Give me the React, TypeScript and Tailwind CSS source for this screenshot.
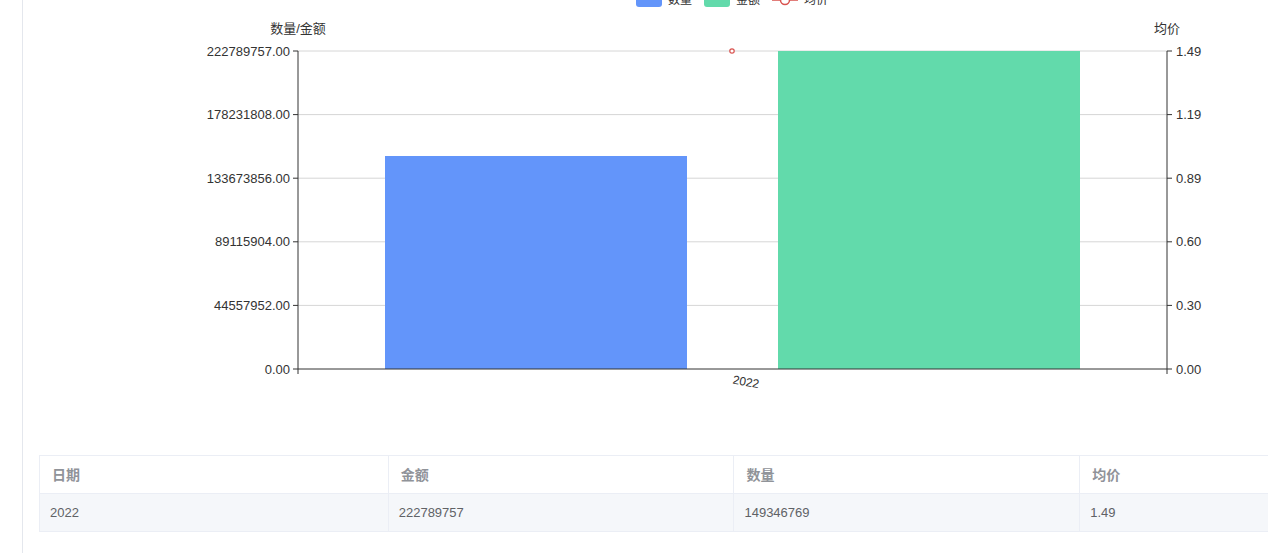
const F = '"Liberation Sans", "Noto Sans CJK SC", sans-serif';

const leftTicks = ['0.00', '44557952.00', '89115904.00', '133673856.00', '178231808.00', '222789757.00'];
const rightTicks = ['0.00', '0.30', '0.60', '0.89', '1.19', '1.49'];

function Chart() {
  // coordinates relative to the content column (page x - 23)
  const ox = 275, ex = 1144, top = 51, bot = 369;
  const step = (bot - top) / 5;
  return (
    <svg width={1245} height={420} className="block" style={{ fontFamily: F }}>
      {/* legend, cut at top */}
      <rect x={613} y={-7} width={26} height={14} rx={3} fill="#6395fa" />
      <text x={645} y={4} fontSize={12} fill="#333">数量</text>
      <rect x={681} y={-7} width={26} height={14} rx={3} fill="#62daab" />
      <text x={713} y={4} fontSize={12} fill="#333">金额</text>
      <line x1={749} y1={0} x2={775} y2={0} stroke="#d9534f" strokeWidth={1.5} />
      <circle cx={762} cy={0} r={4.5} fill="#fff" stroke="#d9534f" strokeWidth={1.5} />
      <text x={781} y={4} fontSize={12} fill="#333">均价</text>

      <text x={ox} y={33} fontSize={13} fill="#333" textAnchor="middle">数量/金额</text>
      <text x={ex} y={33} fontSize={13} fill="#333" textAnchor="middle">均价</text>

      {leftTicks.map((t, i) => {
        const y = bot - i * step;
        return (
          <g key={t}>
            {i > 0 && <line x1={ox} y1={y} x2={ex} y2={y} stroke="#d6d6d6" />}
            <line x1={ox - 5} y1={y} x2={ox} y2={y} stroke="#333" />
            <text x={ox - 8} y={y + 4.5} fontSize={13} fill="#333" textAnchor="end">{t}</text>
            <line x1={ex} y1={y} x2={ex + 5} y2={y} stroke="#333" />
            <text x={ex + 9} y={y + 4.5} fontSize={13} fill="#333">{rightTicks[i]}</text>
          </g>
        );
      })}
      <rect x={362} y={156} width={302} height={bot - 156} fill="#6395fa" />
      <rect x={755} y={top} width={302} height={bot - top} fill="#62daab" />
      <line x1={ox} y1={top} x2={ox} y2={bot} stroke="#333" />
      <line x1={ex} y1={top} x2={ex} y2={bot} stroke="#333" />
      <line x1={ox} y1={bot} x2={ex} y2={bot} stroke="#333" />
      <line x1={ox} y1={bot} x2={ox} y2={bot + 5} stroke="#333" />
      <line x1={ex} y1={bot} x2={ex} y2={bot + 5} stroke="#333" />
      <circle cx={709} cy={top} r={2.2} fill="#fff" stroke="#d9534f" strokeWidth={1.2} />
      <text x={723} y={386} fontSize={12} fill="#333" textAnchor="middle" transform="rotate(10 723 382)">2022</text>
    </svg>
  );
}

export default function App() {
  const cols = ['w-[349px]', 'w-[346px]', 'w-[346px]', 'w-[200px]'];
  const head = ['日期', '金额', '数量', '均价'];
  const row = ['2022', '222789757', '149346769', '1.49'];
  return (
    <div className="flex h-[553px] w-[1268px] overflow-hidden bg-white" style={{ fontFamily: F }}>
      <div className="w-[22px] shrink-0" />
      <div className="min-w-0 flex-1 border-l border-[#e4e7ed]">
        <Chart />
        <div className="ml-4 mt-[35px] w-[1241px] border-t border-l border-[#ebeef5]">
          <div className="flex h-[38px] border-b border-[#ebeef5] bg-white">
            {head.map((h, i) => (
              <div key={h} className={`${cols[i]} flex items-center border-r border-[#ebeef5] px-3 text-sm font-bold text-[#909399]`}>{h}</div>
            ))}
          </div>
          <div className="flex h-[38px] border-b border-[#ebeef5] bg-[#f5f7fa]">
            {row.map((c, i) => (
              <div key={i} className={`${cols[i]} flex items-center border-r border-[#ebeef5] px-[10px] text-[13px] text-[#606266]`}>{c}</div>
            ))}
          </div>
        </div>
      </div>
    </div>
  );
}
